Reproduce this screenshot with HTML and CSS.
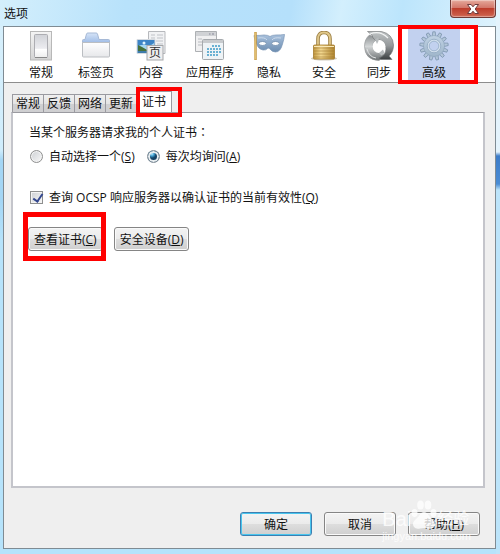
FILE: index.html
```html
<!DOCTYPE html>
<html lang="zh-CN">
<head>
    <meta charset="UTF-8" />
    <meta name="viewport" content="width=device-width, initial-scale=1.0" />
    <title>选项</title>
    <link rel="stylesheet" href="styles.css">
</head>
<body>
    <div class="window">
        <header class="titlebar">
            <h1>选项</h1>
            <button type="button" class="close" aria-label="关闭">
                <svg width="14" height="12" viewBox="0 0 14 12">
                    <path d="M1.500 1.500h3.600L7 3.800l1.900-2.300h3.600L9.200 6l3.300 4.500H8.900L7 8.200l-1.900 2.300H1.500L4.800 6z" fill="#fff" stroke="#6d3a3c" stroke-width="1" />
                </svg>
            </button>
        </header>

        <div class="client">
            <nav class="toolbar">
                <button type="button" class="tool">
                    <svg width="30" height="30" viewBox="0 0 30 30">
                        <defs>
                            <linearGradient id="plate" x1="0" y1="0" x2="0" y2="1"><stop offset="0" stop-color="#f4f4f4" /><stop offset="1" stop-color="#d4d4d4" /></linearGradient>
                            <linearGradient id="rocker" x1="0" y1="0" x2="0" y2="1"><stop offset="0" stop-color="#d0d2d7" /><stop offset=".6" stop-color="#ececf0" /><stop offset=".65" stop-color="#fff" /><stop offset="1" stop-color="#eee" /></linearGradient>
                        </defs>
                        <rect x="4.500" y=".5" width="21" height="28.500" fill="url(#plate)" stroke="#b8b8b8" />
                        <rect x="8.500" y="3.500" width="13" height="23" rx="1" fill="url(#rocker)" stroke="#adadb2" />
                        <path d="M9 26.500h12" stroke="#888" />
                    </svg>
                    <span>常规</span>
                </button>
                <button type="button" class="tool">
                    <svg width="30" height="30" viewBox="0 0 30 30">
                        <defs>
                            <linearGradient id="tabblue" x1="0" y1="0" x2="0" y2="1"><stop offset="0" stop-color="#d6e4f7" /><stop offset="1" stop-color="#9dbbe6" /></linearGradient>
                            <linearGradient id="sheet" x1="0" y1="0" x2="0" y2="1"><stop offset="0" stop-color="#fff" /><stop offset="1" stop-color="#e6e7ea" /></linearGradient>
                        </defs>
                        <path d="M1.500 12V9.500q0-1 1-1H4L5.500 3q.3-1 1.300-1h8.400q1 0 1.300 1L18 8.500h9.500q1 0 1 1V12z" fill="url(#tabblue)" stroke="#a6b9d6" />
                        <path d="M1.500 11.500h27V25q0 1-1 1h-25q-1 0-1-1z" fill="url(#sheet)" stroke="#bbbec2" />
                    </svg>
                    <span>标签页</span>
                </button>
                <button type="button" class="tool">
                    <svg width="30" height="30" viewBox="0 0 30 30">
                        <path d="M12.500.5h16.500v22h-16.500z" fill="#f1f2f4" stroke="#b7b9bd" />
                        <path d="M15 4h4M21 4h6M15 7h4M21 7h6M20 10h7M21 13h6" stroke="#c0c3c8" stroke-width="1" />
                        <path d="M1 8.500h18v14H1z" fill="#3d84c6" stroke="#d5dae0" />
                        <path d="M2 15q5-2 9-1t7-2v10H2z" fill="#a4d7f1" />
                        <path d="M2 20v-6l4 2 7 4z" fill="#46713b" />
                        <path d="M2 20h16v2H2z" fill="#3e7cab" />
                        <circle cx="8" cy="12" r="1.500" fill="#dff4ff" />
                        <rect x="11" y="14.500" width="16" height="14.500" fill="#eeeeef" stroke="#a5a7aa" />
                        <text class="page-mark" x="13" y="26">页</text>
                    </svg>
                    <span>内容</span>
                </button>
                <button type="button" class="tool">
                    <svg width="30" height="30" viewBox="0 0 30 30">
                        <path d="M.5.500h21v20H.5z" fill="#f0f0f1" stroke="#adb0b3" />
                        <path d="M1 3h20" stroke="#d0d2d5" stroke-width="4" />
                        <path d="M14 3h1.500M17 3h2" stroke="#889" />
                        <path d="M3 8h4M3 11h4M3 14h4" stroke="#b8bbc0" />
                        <rect x="7.500" y="8.500" width="21" height="20" rx="1" fill="#eef3f6" stroke="#a5a9ad" />
                        <path d="M8 10.500h20" stroke="#c8cbce" stroke-width="3" />
                        <path d="M17 15h9M12 18h14M12 21h14M12 24h11" stroke="#69b1d3" stroke-width="2" stroke-dasharray="2 1" />
                    </svg>
                    <span>应用程序</span>
                </button>
                <button type="button" class="tool">
                    <svg width="32" height="30" viewBox="0 0 32 30">
                        <defs>
                            <linearGradient id="mask" x1="0" y1="0" x2="0" y2="1"><stop offset="0" stop-color="#a9c1dd" /><stop offset="1" stop-color="#6c8db0" /></linearGradient>
                        </defs>
                        <path d="M1 4.500q7 0 10-.5 4 0 6 1.500 2-1.500 6-1.500 5 0 8.500-.5-.5 5-2 9.500-2 8-7 8-3.500 0-5.500-3-1-1-2-1-2 2.500-5 2-5-1-6.500-6.500Q1.500 9 1 4.500z" fill="url(#mask)" stroke="#7893b4" stroke-width=".7" />
                        <ellipse cx="9.500" cy="12.500" rx="3.800" ry="2" fill="#fff" stroke="#6c89aa" stroke-width=".8" />
                        <ellipse cx="22.500" cy="12.500" rx="3.800" ry="2" fill="#fff" stroke="#6c89aa" stroke-width=".8" />
                        <path d="M5 7q7-1 9 2M28 7q-7-1-9 2" fill="none" stroke="#cbdaeb" />
                        <path d="M2.500 1v28" stroke="#c0913a" stroke-width="2.400" />
                        <path d="M2.200 1.500v27" stroke="#f0d284" stroke-width="1" />
                    </svg>
                    <span>隐私</span>
                </button>
                <button type="button" class="tool">
                    <svg width="30" height="30" viewBox="0 0 30 30">
                        <defs>
                            <linearGradient id="brass" x1="0" y1="0" x2="1" y2="0"><stop offset="0" stop-color="#c39a42" /><stop offset=".35" stop-color="#f3d991" /><stop offset="1" stop-color="#b1862f" /></linearGradient>
                        </defs>
                        <ellipse cx="15" cy="27.500" rx="13" ry="2" fill="#d2cdc2" />
                        <path d="M9 16V8q0-6.500 6-6.500T21 8v8" fill="none" stroke="#9c7f44" stroke-width="3.600" />
                        <path d="M9 16V8q0-6.500 6-6.500T21 8v8" fill="none" stroke="#e0c88b" stroke-width="1.800" />
                        <rect x="4.500" y="14" width="21" height="14" rx="1" fill="url(#brass)" stroke="#a47b2c" stroke-width=".8" />
                        <path d="M5 17h20M5 20h20M5 23h20M5 26h20" stroke="#98712b" stroke-opacity=".5" />
                        <path d="M5 15.500h20" stroke="#f9e9b8" />
                    </svg>
                    <span>安全</span>
                </button>
                <button type="button" class="tool">
                    <svg width="30" height="30" viewBox="0 0 30 30">
                        <defs>
                            <linearGradient id="steel" x1="0" y1="0" x2="0" y2="1"><stop offset="0" stop-color="#8b8f91" /><stop offset=".45" stop-color="#d3d6d7" /><stop offset="1" stop-color="#6b6f71" /></linearGradient>
                            <linearGradient id="steel2" x1="0" y1="0" x2="0" y2="1"><stop offset="0" stop-color="#c0c4c5" /><stop offset=".5" stop-color="#95999b" /><stop offset="1" stop-color="#3b3f41" /></linearGradient>
                        </defs>
                        <path d="M15 8.500Q9 9 9 15t6 7l-1-3 7 6-6 4.500Q1 29 .5 15.500.5 8 5.500 4z" fill="url(#steel)" stroke="#8b8f91" stroke-width=".6" />
                        <path d="M3.500.5h14Q29 3 29.500 14q0 7-4.500 11l3 3.500H17l-2-1.500q4-1 6-5 2-4 0-8-2-5-6-5.500v4L9 7l-1-3z" fill="url(#steel2)" stroke="#6b6f71" stroke-width=".6" />
                        <circle cx="15" cy="15.500" r="6.500" fill="#fff" />
                        <path d="M11 8.500 14.500 6v4l-1.500 3zM15 22l4-3.500 1.500 3.500-3 2.500z" fill="#b7bbbd" />
                        <path d="M6 3q10-4 18 4" fill="none" stroke="#f2f4f4" stroke-width="1.200" />
                        <path d="M3 18q2 8 9 9" fill="none" stroke="#e2e4e5" />
                    </svg>
                    <span>同步</span>
                </button>
                <button type="button" class="tool selected marked marked-tool">
                    <svg width="30" height="30" viewBox="0 0 30 30">
                        <defs>
                            <linearGradient id="gear" x1="0" y1="0" x2="0" y2="1"><stop offset="0" stop-color="#c0d2e4" /><stop offset="1" stop-color="#9fb6ca" /></linearGradient>
                            <path id="tooth" d="M13.200 5.500 13.800.8h2.400l.6 4.700z" />
                        </defs>
                        <g fill="#b3c6d9" stroke="#7f97b0" stroke-width=".8">
                            <use href="#tooth" />
                            <use href="#tooth" transform="rotate(27.700 15 15)" />
                            <use href="#tooth" transform="rotate(55.400 15 15)" />
                            <use href="#tooth" transform="rotate(83.100 15 15)" />
                            <use href="#tooth" transform="rotate(110.800 15 15)" />
                            <use href="#tooth" transform="rotate(138.500 15 15)" />
                            <use href="#tooth" transform="rotate(166.200 15 15)" />
                            <use href="#tooth" transform="rotate(193.800 15 15)" />
                            <use href="#tooth" transform="rotate(221.500 15 15)" />
                            <use href="#tooth" transform="rotate(249.200 15 15)" />
                            <use href="#tooth" transform="rotate(276.900 15 15)" />
                            <use href="#tooth" transform="rotate(304.600 15 15)" />
                            <use href="#tooth" transform="rotate(332.300 15 15)" />
                        </g>
                        <circle cx="15" cy="15" r="10.500" fill="url(#gear)" stroke="#8ba2ba" stroke-width=".6" />
                        <circle cx="15" cy="15" r="6.800" fill="#d3e0ed" stroke="#91a8c0" stroke-width=".8" />
                        <circle cx="15" cy="15" r="4.800" fill="#c2d1ef" stroke="#96adc8" stroke-width=".8" />
                    </svg>
                    <span>高级</span>
                </button>
            </nav>

            <main class="content">
                <div class="tabs" role="tablist">
                    <button type="button" class="tab" role="tab">常规</button>
                    <button type="button" class="tab" role="tab">反馈</button>
                    <button type="button" class="tab" role="tab">网络</button>
                    <button type="button" class="tab" role="tab">更新</button>
                    <button type="button" class="tab active marked marked-tab" role="tab" aria-selected="true">证书</button>
                </div>

                <form class="panel">
                    <p class="question" id="question">当某个服务器请求我的个人证书<span class="colon" lang="zh-TW">：</span></p>
                    <div class="choices" role="radiogroup" aria-labelledby="question">
                        <label class="choice"><input type="radio" name="cert" /><span>自动选择一个(<u>S</u>)</span></label>
                        <label class="choice"><input type="radio" name="cert" checked /><span>每次均询问(<u>A</u>)</span></label>
                    </div>
                    <label class="choice ocsp"><input type="checkbox" checked /><span>查询 OCSP 响应服务器以确认证书的当前有效性(<u>Q</u>)</span></label>
                    <div class="actions">
                        <button type="button" class="btn marked marked-btn">查看证书(<u>C</u>)</button>
                        <button type="button" class="btn">安全设备(<u>D</u>)</button>
                    </div>
                </form>
            </main>

            <footer class="footer">
                <button type="button" class="btn wide default">确定</button>
                <button type="button" class="btn wide">取消</button>
                <button type="button" class="btn wide">帮助(<u>H</u>)</button>
                <div class="watermark">
                    <div class="brand">
                        <span>Bai</span>
                        <svg width="26" height="30" viewBox="0 0 26 30">
                            <ellipse cx="3.500" cy="13" rx="3" ry="4" />
                            <ellipse cx="9.500" cy="5" rx="3.300" ry="4.500" />
                            <ellipse cx="17" cy="5" rx="3.300" ry="4.500" />
                            <ellipse cx="22.500" cy="13" rx="3" ry="4" />
                            <path d="M13 12q3 0 5 4l5 5q2 3 0 6-2 2.500-6 1.500-4-1-8 0-4 1-6-1.500-2-3 0-6l5-5q2-4 5-4z" />
                        </svg>
                        <span class="jingyan">经验</span>
                    </div>
                    <div class="site">jingyan.baidu.com</div>
                </div>
            </footer>
        </div>
    </div>
</body>
</html>
```

FILE: styles.css
```css
* {
    box-sizing: border-box;
    margin: 0;
    padding: 0;
}
body {
    font-family: "Open Sans", "Noto Sans CJK SC", sans-serif;
    font-size: 12px;
    line-height: 16px;
    color: #111;
}
button {
    font: inherit;
    color: inherit;
}

/* Window frame */
.window {
    display: flex;
    flex-direction: column;
    min-height: 100vh;
    padding: 0 4px 5px 3px;
    background:
        linear-gradient(#e4f3fc 0, #e4f3fc 152px, #3d7cc8 156px, #4a8cd4 184px, #bce4fa 190px) right top / 4px 100% no-repeat,
        linear-gradient(100deg, #d4effc 0, #b8e2fb 25%, #b5e0fb 58%, #d3effd 68%, #bce5fc 80%, #dff3fd 100%) left top / 100% 26px no-repeat,
        linear-gradient(#d8f0fc 0, #d0edfc 150px, #a4d6f5 160px, #a4d6f5 200px, #b6e3fb 240px);
}
.titlebar {
    display: flex;
    justify-content: space-between;
    align-items: flex-start;
    height: 26px;
}
.titlebar h1 {
    padding: 6px 0 0 1px;
    font-size: 12px;
    font-weight: 400;
}
.close {
    display: flex;
    align-items: center;
    justify-content: center;
    width: 46px;
    height: 18px;
    border: 1px solid #703a36;
    border-top: 0;
    border-radius: 0 0 4px 4px;
    background: linear-gradient(#e5a99b 0, #d3776a 45%, #bd3d2c 50%, #cf6550 100%);
    box-shadow: inset 0 0 1px 1px rgba(255, 255, 255, 0.4);
}
.client {
    flex: 1;
    display: flex;
    flex-direction: column;
    border: 1px solid #7f8b93;
    background: #efefef;
}

/* Category toolbar */
.toolbar {
    display: flex;
    gap: 3px;
    height: 56px;
    padding: 2px 11px 1px;
    border-bottom: 1px solid #8d8d8d;
    background: #fff;
}
.tool {
    display: flex;
    flex-direction: column;
    align-items: center;
    justify-content: flex-start;
    gap: 4px;
    min-width: 52px;
    padding: 2px 6px 0;
    border: 0;
    background: none;
}
.tool svg {
    display: block;
}
.tool.selected {
    background: #c2d1ef;
}
.page-mark {
    font-family: "Noto Sans CJK SC", sans-serif;
    font-size: 12px;
    fill: #333;
}

/* Highlight frames */
.marked {
    position: relative;
}
.marked::after {
    content: "";
    position: absolute;
    z-index: 1;
    border: 4px solid #f00;
    pointer-events: none;
}
.marked-tool::after {
    inset: -4px -18px -3px -10px;
}
.marked-tab::after {
    inset: -5px -11px -5px -1px;
}
.marked-btn::after {
    border-width: 5px;
    inset: -16px -4px -11px -6px;
}

/* Tabs and panel */
.content {
    flex: 1;
    display: flex;
    flex-direction: column;
    padding: 8px 10px 0 7px;
}
.tabs {
    display: flex;
    align-items: flex-end;
    padding-left: 1px;
}
.tab {
    height: 18px;
    padding: 1px 3px 0;
    border: 1px solid #9a9aa0;
    border-width: 1px 0 0 1px;
    background: linear-gradient(#f0f0f0 0, #e4e4e4 50%, #d0d0d2 55%, #cfcfd1 100%);
}
.tab.active {
    height: 21px;
    margin-left: 1px;
    padding: 0 5px 1px;
    border-width: 1px 1px 0 0;
    background: #fff;
}
.panel {
    flex: 1;
    padding: 11px 14px;
    border: 2px solid #c4c5cb;
    border-top: 1px solid #9a9aa0;
    background: #fff;
}
.question {
    padding-left: 2px;
}
.colon {
    font-family: "Noto Sans CJK TC", sans-serif;
}
.choices {
    display: flex;
    gap: 12px;
    margin-top: 6px;
}
.choice {
    display: flex;
    align-items: center;
    gap: 6px;
    padding-left: 3px;
}
.choices .choice + .choice {
    padding-left: 0;
}
.choice span {
    padding-top: 2px;
}
.ocsp {
    margin-top: 23px;
}
.choice input {
    appearance: none;
    flex: none;
    width: 13px;
    height: 13px;
    border: 1px solid #8e8f8f;
    background: linear-gradient(135deg, #cdd0d4, #f8f8f8);
    box-shadow: inset 0 0 0 1px #f4f4f4;
}
.choice input[type="radio"] {
    border-radius: 50%;
}
.choice input[type="radio"]:checked {
    border-color: #7f8c96;
    background: radial-gradient(circle at 4px 3px, #b9ecff 0, #3f9fd0 2px, #154468 4px, #123c5c 100%);
    box-shadow: inset 0 0 0 2px #e8edf0;
}
.choice input[type="checkbox"]:checked::before {
    content: "";
    display: block;
    width: 4px;
    height: 8px;
    margin: 0 0 0 4px;
    border: solid #34488f;
    border-width: 0 2px 2px 0;
    transform: rotate(35deg);
}

/* Buttons */
.actions {
    display: flex;
    gap: 11px;
    margin-top: 21px;
    padding-left: 1px;
}
.btn {
    height: 24px;
    padding: 2px 5px 0;
    border: 1px solid #858585;
    border-radius: 3px;
    background: linear-gradient(#f3f3f3 0, #ebebeb 48%, #dddddd 52%, #cfcfcf 100%);
    box-shadow: inset 0 0 0 1px #fafafa;
}
.btn.wide {
    width: 72px;
}
.btn.default {
    border-color: #3c7fb1;
    box-shadow: inset 0 0 0 1px #48c5ee;
}
.footer {
    position: relative;
    display: flex;
    justify-content: flex-end;
    gap: 12px;
    padding: 24px 15px 12px;
}

/* Watermark over the footer */
.watermark {
    position: absolute;
    right: 24px;
    bottom: 5px;
    color: #fff;
    opacity: 0.8;
    pointer-events: none;
}
.brand {
    display: flex;
    align-items: flex-end;
    font-family: "Liberation Sans", "Noto Sans CJK SC", sans-serif;
    font-size: 20px;
    line-height: 22px;
}
.brand svg {
    fill: #fff;
}
.jingyan {
    font-size: 16px;
}
.site {
    font-family: "Liberation Sans", sans-serif;
    font-size: 11px;
    line-height: 13px;
}
```
